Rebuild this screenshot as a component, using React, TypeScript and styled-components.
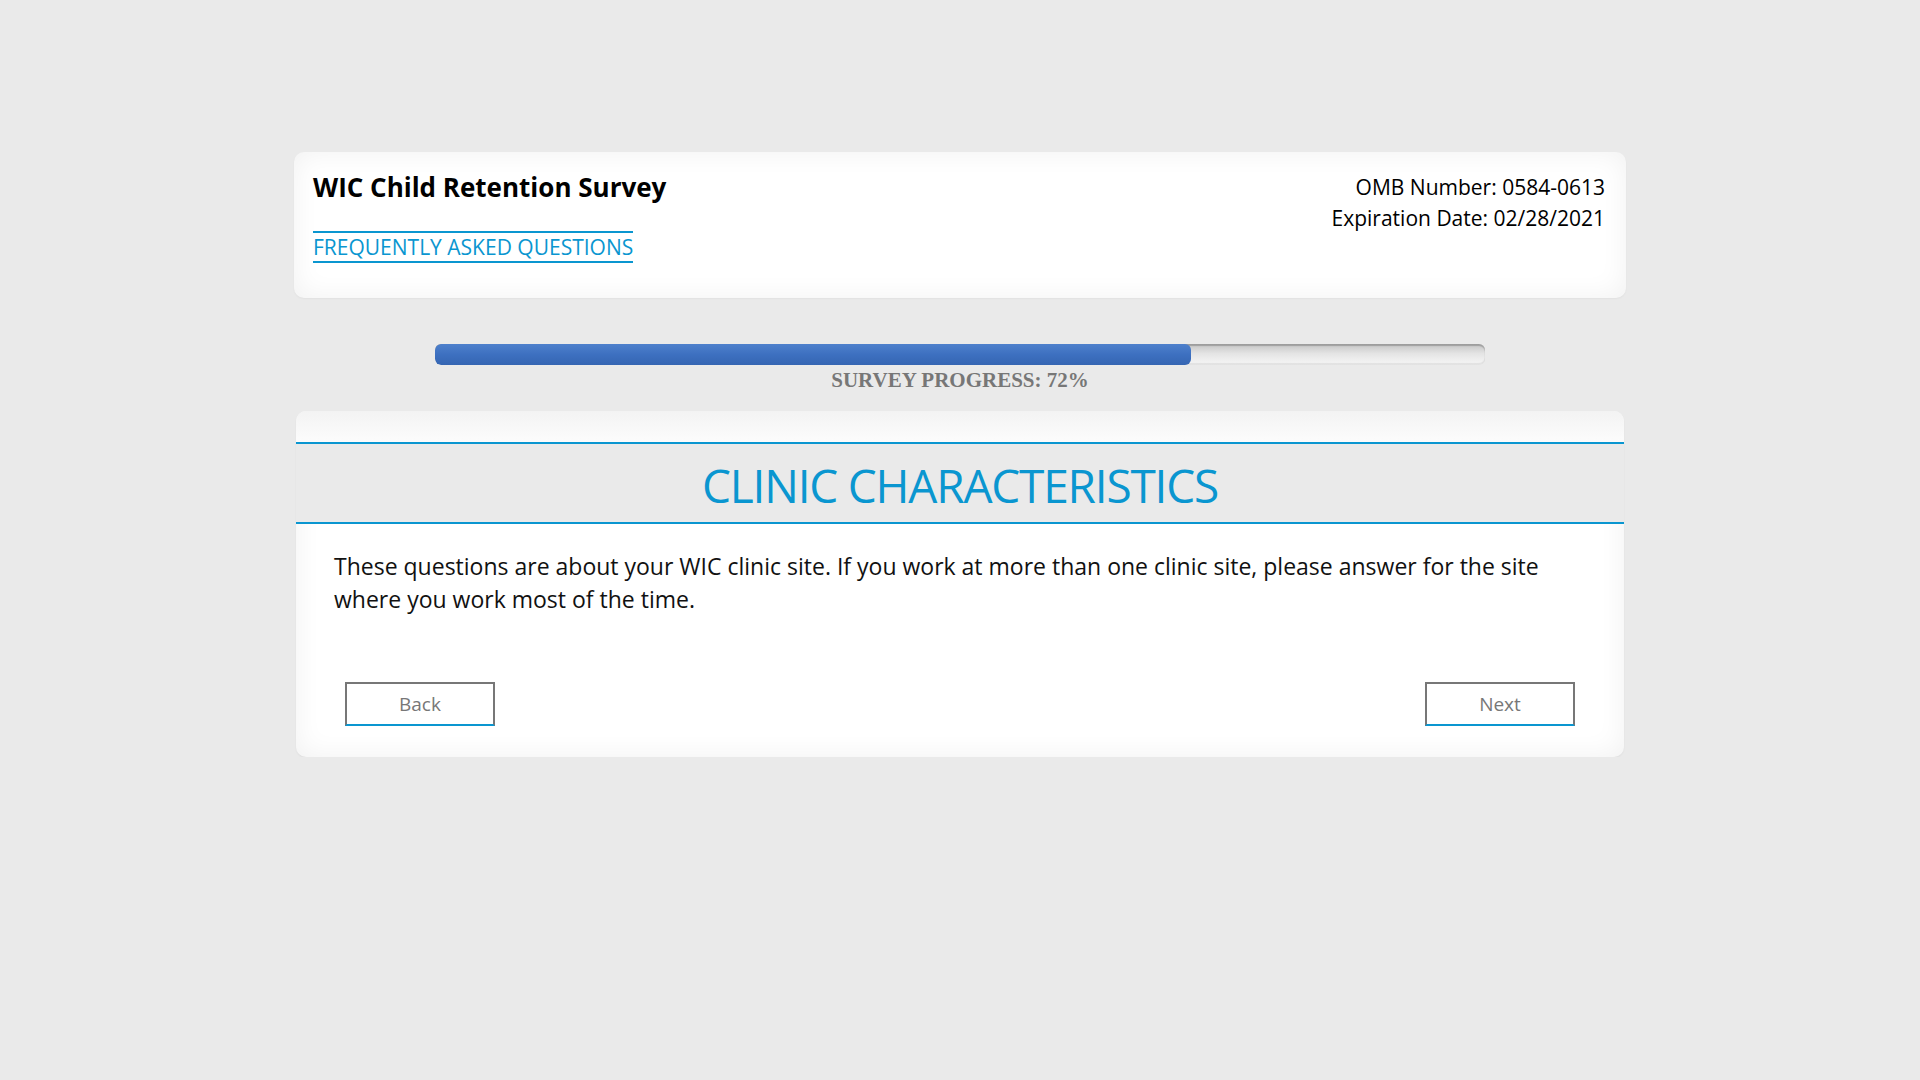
import React from "react";
import styled, { createGlobalStyle } from "styled-components";

const GlobalStyle = createGlobalStyle`
    html, body {
        margin: 0;
        padding: 0;
        background: #eaeaea;
        font-family: "Open Sans", "Noto Sans", sans-serif;
        color: #000;
    }
`;

const progress = 72;

const App = () => {
    return (
        <>
            <GlobalStyle />
            <Page>
                <HeaderCard>
                    <HeaderLeft>
                        <SurveyTitle>WIC Child Retention Survey</SurveyTitle>
                        <FaqLink href="#">FREQUENTLY ASKED QUESTIONS</FaqLink>
                    </HeaderLeft>
                    <HeaderRight>
                        <div>OMB Number: 0584-0613</div>
                        <div>Expiration Date: 02/28/2021</div>
                    </HeaderRight>
                </HeaderCard>

                <ProgressWrap>
                    <ProgressTrack>
                        <ProgressFill style={{ width: `${progress}%` }} />
                    </ProgressTrack>
                    <ProgressLabel>SURVEY PROGRESS: {progress}%</ProgressLabel>
                </ProgressWrap>

                <SectionCard>
                    <TopStrip />
                    <SectionHeader>
                        <SectionTitle>CLINIC CHARACTERISTICS</SectionTitle>
                    </SectionHeader>
                    <SectionBody>
                        <Intro>
                            These questions are about your WIC clinic site. If you work at more than one clinic site, please answer for the site where you work most of the time.
                        </Intro>
                    </SectionBody>
                    <NavRow>
                        <NavButton>Back</NavButton>
                        <NavButton>Next</NavButton>
                    </NavRow>
                </SectionCard>
            </Page>
        </>
    );
};

const Page = styled.div`
    width: 1332px;
    margin: 0 auto;
    padding-top: 152px;
    display: flex;
    flex-direction: column;
    align-items: center;
`;

const HeaderCard = styled.header`
    box-sizing: border-box;
    width: 1332px;
    height: 146px;
    display: flex;
    justify-content: space-between;
    align-items: flex-start;
    padding: 17px 21px 0 19px;
    background: #fff;
    border-radius: 10px;
    box-shadow: inset 0 0 28px rgba(0, 0, 0, 0.06), 0 1px 2px rgba(0, 0, 0, 0.04);
`;

const HeaderLeft = styled.div`
    display: flex;
    flex-direction: column;
    align-items: flex-start;
`;

const SurveyTitle = styled.h1`
    margin: 0;
    font-size: 26px;
    line-height: 36px;
    font-weight: 700;
`;

const FaqLink = styled.a`
    margin-top: 26px;
    font-size: 21px;
    line-height: 28px;
    color: #0a96d0;
    text-decoration: none;
    border-top: 2px solid #0a96d0;
    border-bottom: 2px solid #0a96d0;
`;

const HeaderRight = styled.div`
    text-align: right;
    font-size: 21px;
    line-height: 31px;
    padding-top: 3px;
`;

const ProgressWrap = styled.div`
    margin-top: 46px;
    width: 1050px;
    display: flex;
    flex-direction: column;
    align-items: center;
`;

const ProgressTrack = styled.div`
    width: 100%;
    height: 21px;
    border-radius: 6px;
    overflow: hidden;
    background: linear-gradient(to bottom, #c4c4c4 0%, #e4e4e4 45%, #f7f7f7 100%);
    box-shadow: inset 0 2px 1px rgba(0, 0, 0, 0.2), inset 0 -2px 1px rgba(0, 0, 0, 0.08);
`;

const ProgressFill = styled.div`
    height: 100%;
    border-radius: 6px;
    background: linear-gradient(to bottom, #4e80cc 0%, #3d70c0 50%, #3565b2 100%);
`;

const ProgressLabel = styled.div`
    margin-top: 3px;
    font-family: "Liberation Serif", "Times New Roman", serif;
    font-weight: 700;
    font-size: 21px;
    line-height: 24px;
    color: #777;
`;

const SectionCard = styled.section`
    margin-top: 19px;
    width: 1328px;
    background: #fff;
    border-radius: 10px;
    overflow: hidden;
    box-shadow: inset 0 0 28px rgba(0, 0, 0, 0.06), 0 1px 2px rgba(0, 0, 0, 0.05);
`;

const TopStrip = styled.div`
    height: 31px;
    background: linear-gradient(to bottom, #f3f3f3, #fcfcfc);
`;

const SectionHeader = styled.div`
    height: 78px;
    display: flex;
    align-items: center;
    justify-content: center;
    background: #eaeaea;
    border-top: 2px solid #0a96d0;
    border-bottom: 2px solid #0a96d0;
`;

const SectionTitle = styled.h2`
    margin: 3px 0 0;
    font-size: 46px;
    font-weight: 400;
    letter-spacing: -1.2px;
    color: #0a96d0;
`;

const SectionBody = styled.div`
    padding: 26px 38px 0;
`;

const Intro = styled.p`
    margin: 0;
    font-size: 23px;
    line-height: 33px;
    color: #111;
`;

const NavRow = styled.div`
    display: flex;
    justify-content: space-between;
    padding: 66px 49px 31px;
`;

const NavButton = styled.button`
    box-sizing: border-box;
    width: 150px;
    height: 44px;
    background: #fff;
    border: 2px solid #777;
    border-bottom-color: #0a96d0;
    font-family: "Open Sans", "Noto Sans", sans-serif;
    font-size: 19px;
    color: #777;
    cursor: pointer;
`;

export default App;
